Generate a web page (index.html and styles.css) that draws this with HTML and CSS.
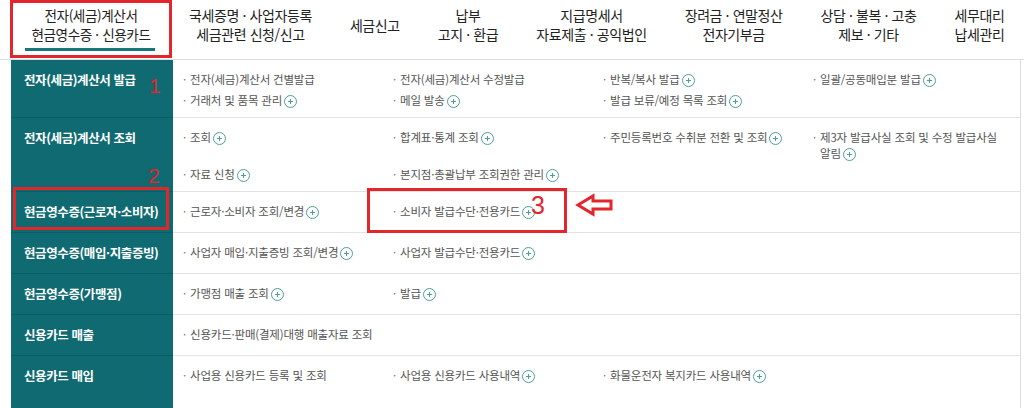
FILE: index.html
```html
<!DOCTYPE html>
<html lang="ko">
<head>
<meta charset="utf-8">
<title>전자(세금)계산서 · 현금영수증 · 신용카드</title>
<link rel="stylesheet" href="styles.css">
</head>
<body>
<header class="gnb">
  <div class="tab-active">
    <div class="tab-text">전자(세금)계산서<br>현금영수증 · 신용카드</div>
    <div class="tab-bar"></div>
  </div>
  <nav class="nav-list">
    <div class="nav-item">국세증명 · 사업자등록<br>세금관련 신청/신고</div>
    <div class="nav-item">세금신고</div>
    <div class="nav-item">납부<br>고지 · 환급</div>
    <div class="nav-item">지급명세서<br>자료제출 · 공익법인</div>
    <div class="nav-item">장려금 · 연말정산<br>전자기부금</div>
    <div class="nav-item">상담 · 불복 · 고충<br>제보 · 기타</div>
    <div class="nav-item">세무대리<br>납세관리</div>
  </nav>
</header>

<main class="menu">
  <div class="row">
    <div class="label">전자(세금)계산서 발급<span class="num num-1">1</span></div>
    <ul class="items">
      <li><span class="dot">·</span>전자(세금)계산서 건별발급</li>
      <li><span class="dot">·</span>전자(세금)계산서 수정발급</li>
      <li><span class="dot">·</span>반복/복사 발급<span class="plus"></span></li>
      <li><span class="dot">·</span>일괄/공동매입분 발급<span class="plus"></span></li>
      <li><span class="dot">·</span>거래처 및 품목 관리<span class="plus"></span></li>
      <li><span class="dot">·</span>메일 발송<span class="plus"></span></li>
      <li><span class="dot">·</span>발급 보류/예정 목록 조회<span class="plus"></span></li>
    </ul>
  </div>
  <div class="row">
    <div class="label">전자(세금)계산서 조회<span class="num num-2">2</span></div>
    <ul class="items">
      <li><span class="dot">·</span>조회<span class="plus"></span></li>
      <li><span class="dot">·</span>합계표·통계 조회<span class="plus"></span></li>
      <li><span class="dot">·</span>주민등록번호 수취분 전환 및 조회<span class="plus"></span></li>
      <li><span class="dot">·</span>제3자 발급사실 조회 및 수정 발급사실 알림<span class="plus"></span></li>
      <li><span class="dot">·</span>자료 신청<span class="plus"></span></li>
      <li><span class="dot">·</span>본지점·총괄납부 조회권한 관리<span class="plus"></span></li>
    </ul>
  </div>
  <div class="row">
    <div class="label">현금영수증(근로자·소비자)<span class="mark mark-label"></span></div>
    <ul class="items">
      <li><span class="dot">·</span>근로자·소비자 조회/변경<span class="plus"></span></li>
      <li class="marked"><span class="dot">·</span>소비자 발급수단·전용카드<span class="plus"></span><span class="mark mark-item"></span><span class="num num-3">3</span><svg class="arrow" width="40" height="24" viewBox="0 0 40 24"><path d="M3 12 L18 3 L18 8 L36 8 L36 16 L18 16 L18 21 Z" fill="#fff" stroke="#e2262b" stroke-width="3" stroke-linejoin="miter"/></svg></li>
    </ul>
  </div>
  <div class="row">
    <div class="label">현금영수증(매입·지출증빙)</div>
    <ul class="items">
      <li><span class="dot">·</span>사업자 매입·지출증빙 조회/변경<span class="plus"></span></li>
      <li><span class="dot">·</span>사업자 발급수단·전용카드<span class="plus"></span></li>
    </ul>
  </div>
  <div class="row">
    <div class="label">현금영수증(가맹점)</div>
    <ul class="items">
      <li><span class="dot">·</span>가맹점 매출 조회<span class="plus"></span></li>
      <li><span class="dot">·</span>발급<span class="plus"></span></li>
    </ul>
  </div>
  <div class="row">
    <div class="label">신용카드 매출</div>
    <ul class="items">
      <li><span class="dot">·</span>신용카드·판매(결제)대행 매출자료 조회</li>
    </ul>
  </div>
  <div class="row row-last">
    <div class="label">신용카드 매입</div>
    <ul class="items">
      <li><span class="dot">·</span>사업용 신용카드 등록 및 조회</li>
      <li><span class="dot">·</span>사업용 신용카드 사용내역<span class="plus"></span></li>
      <li><span class="dot">·</span>화물운전자 복지카드 사용내역<span class="plus"></span></li>
    </ul>
  </div>
</main>
</body>
</html>
```

FILE: styles.css
```css
* { box-sizing: border-box; }

body {
  margin: 0;
  background: #fff;
  font-family: "Noto Sans CJK KR", "Noto Sans", sans-serif;
  color: #333;
  overflow: hidden;
}

/* ---------- top navigation ---------- */
.gnb {
  display: flex;
  align-items: flex-start;
  height: 60px;
  padding-left: 10px;
  border-bottom: 1px solid #dedede;
}

.tab-active {
  width: 162px;
  height: 58px;
  border: 3px solid #e2262b;
  padding-top: 3px;
  text-align: center;
  font-size: 13.6px;
  line-height: 19px;
  letter-spacing: -0.4px;
  color: #222;
  white-space: nowrap;
}

.tab-bar {
  height: 3px;
  margin: 4px 14px 0 12px;
  background: #17757c;
}

.nav-list {
  display: flex;
  gap: 38px;
  margin-left: 17px;
  padding-top: 6px;
}

.nav-item {
  height: 38px;
  display: flex;
  flex-direction: column;
  justify-content: center;
  text-align: center;
  font-size: 14px;
  line-height: 19px;
  letter-spacing: -0.4px;
  color: #222;
  white-space: nowrap;
}

/* ---------- menu table ---------- */
.menu {
  margin-left: 11px;
  width: 1010px;
  border-right: 1px solid #dedede;
}

.row {
  display: flex;
  min-height: 41px;
}

.row-last {
  min-height: 60px;
}

.label {
  position: relative;
  width: 162px;
  flex: none;
  background: #0f6a72;
  border-bottom: 1px solid #0b5c63;
  padding: 12px 0 0 13px;
  color: #fff;
  font-size: 12.5px;
  font-weight: bold;
  line-height: 16px;
  letter-spacing: -0.4px;
  white-space: nowrap;
}

.items {
  flex: 1;
  margin: 0;
  list-style: none;
  display: grid;
  grid-template-columns: 210px 210px 210px 1fr;
  align-content: start;
  row-gap: 5px;
  padding: 11px 18px 9px 10px;
  border-bottom: 1px solid #e3e3e3;
  font-size: 11.5px;
  line-height: 16px;
  color: #555;
  letter-spacing: -0.2px;
  word-break: keep-all;
}

.items li {
  position: relative;
  padding-left: 7px;
  text-indent: -7px;
}

.dot {
  display: inline-block;
  width: 7px;
  text-indent: 0;
  color: #777;
}

.plus {
  display: inline-block;
  width: 13px;
  height: 13px;
  margin-left: 2px;
  vertical-align: -3px;
  border: 1px solid #4f9f92;
  border-radius: 50%;
  background:
    linear-gradient(#4f9f92, #4f9f92) center / 5px 1px no-repeat,
    linear-gradient(#4f9f92, #4f9f92) center / 1px 5px no-repeat;
}

/* ---------- red annotations (overlays) ---------- */
.mark {
  position: absolute;
  border: 3px solid #e2262b;
}

.mark-label {
  left: 2px;
  top: -5px;
  width: 156px;
  height: 43px;
}

.mark-item {
  left: -26px;
  top: -15px;
  width: 200px;
  height: 45px;
}

.num {
  position: absolute;
  font-family: "Liberation Sans", Arial, sans-serif;
  font-weight: normal;
  color: #e2262b;
  line-height: 1;
  text-indent: 0;
}

.num-1 { left: 138px; top: 15px; font-size: 21px; }
.num-2 { left: 137px; top: 47px; font-size: 21px; }
.num-3 { left: 138px; top: -10px; font-size: 25px; }

.arrow {
  position: absolute;
  left: 182px;
  top: -10px;
}
```
